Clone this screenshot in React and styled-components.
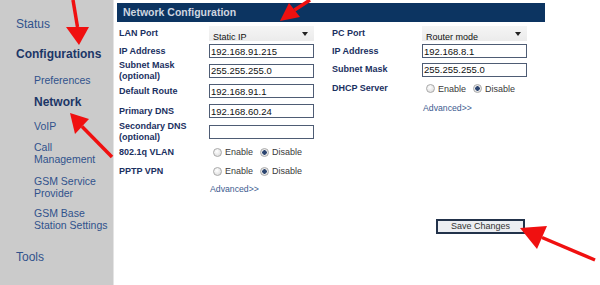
import React from "react";
import styled, { createGlobalStyle } from "styled-components";

const GlobalStyle = createGlobalStyle`
  html, body { margin: 0; padding: 0; height: 100%; }
  body { font-family: "Liberation Sans", Arial, sans-serif; background: #fff; }
`;

const leftRows = [
  { label: "LAN Port", kind: "select", value: "Static IP", h: 18 },
  { label: "IP Address", kind: "input", value: "192.168.91.215", h: 18 },
  { label: ["Subnet Mask", "(optional)"], kind: "input", value: "255.255.255.0", h: 21 },
  { label: "Default Route", kind: "input", value: "192.168.91.1", h: 20 },
  { label: "Primary DNS", kind: "input", value: "192.168.60.24", h: 20 },
  { label: ["Secondary DNS", "(optional)"], kind: "input", value: "", h: 21 },
  { label: "802.1q VLAN", kind: "radio", name: "vlan", h: 20 },
  { label: "PPTP VPN", kind: "radio", name: "pptp", h: 18 },
  { label: "", kind: "link", h: 18 },
];

const rightRows = [
  { label: "PC Port", kind: "select", value: "Router mode", h: 18 },
  { label: "IP Address", kind: "input", value: "192.168.8.1", h: 18 },
  { label: "Subnet Mask", kind: "input", value: "255.255.255.0", h: 19 },
  { label: "DHCP Server", kind: "radio", name: "dhcp", h: 19 },
  { label: "", kind: "link", h: 19 },
];

const Page = styled.div`
  position: relative;
  display: flex;
  height: 100vh;
  overflow: hidden;
`;

const Sidebar = styled.nav`
  width: 114px;
  flex-shrink: 0;
  background: #cbcbcb;
  border-right: 1px solid #e4e4e4;
  padding: 17px 0 0 16px;
  box-sizing: border-box;
  display: flex;
  flex-direction: column;
`;

const NavItem = styled.div`
  margin-top: ${(p) => p.$mt || 0}px;
  padding-left: ${(p) => (p.$sub ? 18 : 0)}px;
  font-size: ${(p) => (p.$sub ? (p.$bold ? 12 : 10.5) : 12)}px;
  line-height: ${(p) => (p.$sub ? 12 : 14)}px;
  font-weight: ${(p) => (p.$bold ? "bold" : "normal")};
  color: ${(p) => (p.$bold ? "#1c3667" : "#30528c")};
`;

const Main = styled.main`
  flex: 1;
  padding: 3px 0 0 3px;
`;

const Panel = styled.section`
  width: 428px;
`;

const PanelTitle = styled.h1`
  margin: 0;
  height: 19px;
  line-height: 19px;
  padding-left: 6px;
  background: #0c3461;
  color: #cfd6e0;
  font-size: 10.5px;
  font-weight: bold;
`;

const FormGrid = styled.div`
  display: flex;
  gap: 18px;
  margin-top: 2px;
  padding-left: 2px;
`;

const Column = styled.div`
  display: flex;
  flex-direction: column;
  width: 195px;
`;

const Row = styled.div`
  display: flex;
  align-items: center;
  height: ${(p) => p.$h}px;
`;

const Label = styled.label`
  width: 90px;
  flex-shrink: 0;
  font-size: 9px;
  line-height: 11px;
  font-weight: bold;
  color: #1b3061;
`;

const TextInput = styled.input`
  width: 105px;
  height: 14px;
  box-sizing: border-box;
  border: 1px solid #4e5c74;
  padding: 0 1px;
  font-family: inherit;
  font-size: 9.5px;
  color: #111;
  outline: none;
`;

const SelectWrap = styled.div`
  position: relative;
  width: 105px;
  height: 15px;
  background: linear-gradient(#f5f5f5, #ebebeb);
`;

const Select = styled.select`
  appearance: none;
  width: 100%;
  height: 100%;
  border: none;
  background: transparent;
  padding: 0 0 0 4px;
  font-family: inherit;
  font-size: 9px;
  color: #111;
  outline: none;
`;

const Caret = styled.span`
  position: absolute;
  right: 6px;
  top: 6px;
  border-left: 3px solid transparent;
  border-right: 3px solid transparent;
  border-top: 4px solid #222;
  pointer-events: none;
`;

const RadioGroup = styled.div`
  display: flex;
  align-items: center;
  padding-left: 4px;
`;

const Radio = styled.input`
  appearance: none;
  margin: 0 3px 0 ${(p) => p.$gap || 0}px;
  width: 9px;
  height: 9px;
  border-radius: 50%;
  border: 1px solid #a9a9a9;
  box-sizing: border-box;
  background: radial-gradient(circle at 40% 35%, #ffffff, #d6d6d6);
  &:checked {
    background: radial-gradient(circle, #2c4570 0 2px, #e9e9e9 2.5px);
  }
`;

const RadioText = styled.span`
  font-size: 9px;
  color: #3a3a3a;
`;

const Advanced = styled.a`
  margin-left: 1px;
  font-size: 8.7px;
  color: #3c5b90;
  text-decoration: none;
`;

const Footer = styled.div`
  display: flex;
  justify-content: flex-end;
  padding-right: 20px;
  margin-top: 21px;
`;

const SaveButton = styled.button`
  width: 89px;
  height: 15px;
  padding: 0;
  border: 2px solid #22324a;
  background: #eceef2;
  font-family: inherit;
  font-size: 9px;
  color: #333;
  line-height: 11px;
`;

const Annotations = styled.svg`
  position: absolute;
  inset: 0;
  pointer-events: none;
`;

function Field({ row }) {
  if (row.kind === "select") {
    return (
      <SelectWrap>
        <Select defaultValue={row.value}>
          <option>{row.value}</option>
        </Select>
        <Caret />
      </SelectWrap>
    );
  }
  if (row.kind === "input") return <TextInput defaultValue={row.value} />;
  if (row.kind === "radio") {
    return (
      <RadioGroup>
        <Radio type="radio" name={row.name} />
        <RadioText>Enable</RadioText>
        <Radio type="radio" name={row.name} $gap={7} defaultChecked />
        <RadioText>Disable</RadioText>
      </RadioGroup>
    );
  }
  return <Advanced href="#">Advanced&gt;&gt;</Advanced>;
}

function FormColumn({ rows }) {
  return (
    <Column>
      {rows.map((row, i) => (
        <Row key={i} $h={row.h}>
          <Label>
            {Array.isArray(row.label) ? (
              <>
                {row.label[0]}
                <br />
                {row.label[1]}
              </>
            ) : (
              row.label
            )}
          </Label>
          <Field row={row} />
        </Row>
      ))}
    </Column>
  );
}

function Arrow({ tail, tip, base1, base2 }) {
  return (
    <g fill="#f01010" stroke="#f01010">
      <line x1={tail[0]} y1={tail[1]} x2={(base1[0] + base2[0]) / 2} y2={(base1[1] + base2[1]) / 2} strokeWidth="3.5" />
      <polygon points={`${tip.join(",")} ${base1.join(",")} ${base2.join(",")}`} strokeWidth="0" />
    </g>
  );
}

const App = () => {
  return (
    <Page>
      <GlobalStyle />
      <Sidebar>
        <NavItem>Status</NavItem>
        <NavItem $bold $mt={16}>Configurations</NavItem>
        <NavItem $sub $mt={13}>Preferences</NavItem>
        <NavItem $sub $bold $mt={10}>Network</NavItem>
        <NavItem $sub $mt={12}>VoIP</NavItem>
        <NavItem $sub $mt={9}>Call<br />Management</NavItem>
        <NavItem $sub $mt={10}>GSM Service<br />Provider</NavItem>
        <NavItem $sub $mt={8}>GSM Base<br />Station Settings</NavItem>
        <NavItem $mt={19}>Tools</NavItem>
      </Sidebar>
      <Main>
        <Panel>
          <PanelTitle>Network Configuration</PanelTitle>
          <FormGrid>
            <FormColumn rows={leftRows} />
            <FormColumn rows={rightRows} />
          </FormGrid>
          <Footer>
            <SaveButton>Save Changes</SaveButton>
          </Footer>
        </Panel>
      </Main>
      <Annotations width="600" height="285" viewBox="0 0 600 285">
        <Arrow tail={[73, 0]} tip={[79, 45]} base1={[66, 27]} base2={[89, 27]} />
        <Arrow tail={[112, 157]} tip={[70, 113]} base1={[89, 119]} base2={[75, 134]} />
        <Arrow tail={[310, 0]} tip={[280, 21]} base1={[289, 3]} base2={[300, 17]} />
        <Arrow tail={[595, 260]} tip={[520, 228]} base1={[547, 226]} base2={[537, 249]} />
      </Annotations>
    </Page>
  );
};

export default App;
